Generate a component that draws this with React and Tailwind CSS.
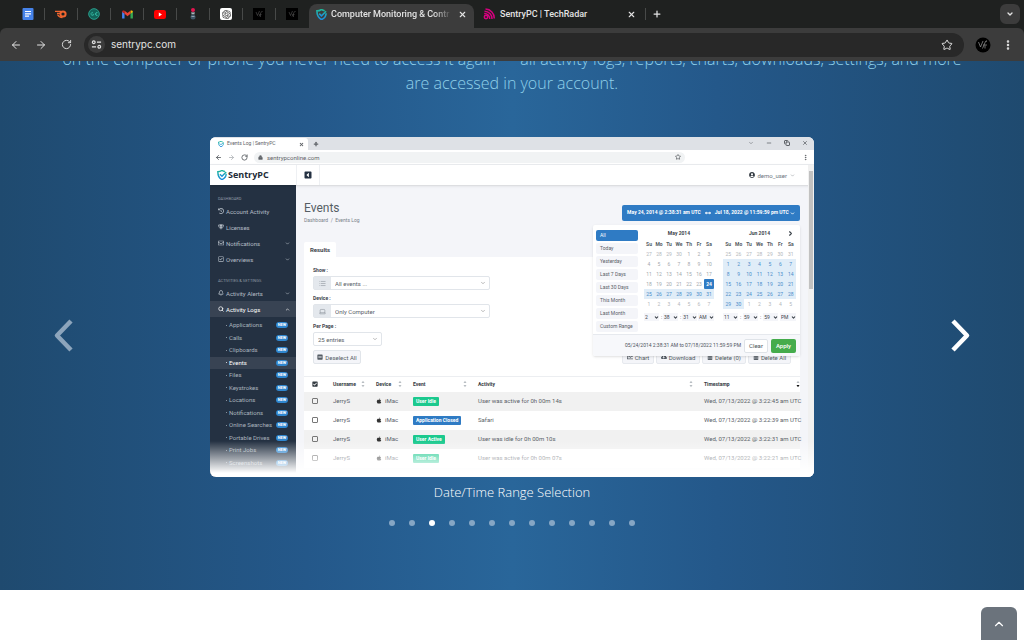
import {
  ArrowLeft, ArrowRight, RotateCw, Star, ChevronDown, ChevronUp, ChevronRight,
  X, Plus, Minus, Copy, MoreVertical, Lock, Bell, Search, List, Laptop,
} from 'lucide-react'
import {
  FaHistory, FaGem, FaRegEnvelope, FaRegCheckSquare, FaCheckSquare, FaMinusSquare, FaApple,
  FaTrashAlt, FaChartLine, FaCloudDownloadAlt, FaUserCircle, FaCaretSquareLeft, FaArrowsAltH,
} from 'react-icons/fa'
import { SiOpenai } from 'react-icons/si'

const ShieldLogo = ({ className }) => (
  <svg viewBox="0 0 24 24" className={className} fill="none" aria-hidden="true">
    <defs>
      <linearGradient id="shield" x1="0" y1="0" x2="0" y2="1">
        <stop offset="0" stopColor="#1fb89a" />
        <stop offset="1" stopColor="#1d8ee0" />
      </linearGradient>
    </defs>
    <path d="M22 9c0 7-3 11-10 14C5 20 2 15 2 4c4 0 7-1 10-3 2 1.500 4 2.400 7 2.800" stroke="url(#shield)" strokeWidth="3.500" />
    <path d="M7 10l5 5L22 5" stroke="url(#shield)" strokeWidth="3.500" />
  </svg>
)

const DocsIcon = () => (
  <svg viewBox="0 0 12 12" className="size-3">
    <rect x="0.500" y="0" width="11" height="12" rx="1" fill="#4683ea" />
    <path d="M3 3.500h6M3 5.800h6M3 8.100h4" stroke="#fff" strokeWidth="1.200" />
  </svg>
)

const SemrushIcon = () => (
  <svg viewBox="0 0 12 12" className="size-3" fill="none">
    <path d="M0 3.300h6M2 5.300h3" stroke="#f0652f" strokeWidth="1.200" />
    <circle cx="8" cy="6" r="2.600" stroke="#f0652f" strokeWidth="2" />
    <path d="M2.500 6.500c1 2 2.500 3 5 3" stroke="#f0652f" strokeWidth="1.300" />
  </svg>
)

const GreenIcon = () => (
  <svg viewBox="0 0 12 12" className="size-3" fill="none">
    <circle cx="6" cy="6" r="5.300" fill="#12645a" stroke="#2aa08d" />
    <path d="M5 4.500a1.500 1.500 0 1 0 .3 2.700V6H4.500M9.500 4.500a1.600 1.600 0 1 0 0 3M7 6h2" stroke="#38c2aa" strokeWidth="0.800" />
  </svg>
)

const GmailIcon = () => (
  <svg viewBox="0 0 12 10" className="h-[9px] w-[11px]">
    <path d="M0 1.500V9.500h2.700V4z" fill="#4285f4" />
    <path d="M12 1.500V9.500H9.300V4z" fill="#34a853" />
    <path d="M9.300 4.200L12 2.200C12 .4 10.400 0 9.300.9z" fill="#fbbc04" />
    <path d="M2.700 4.200L0 2.200C0 .4 1.600 0 2.700.9z" fill="#c5221f" />
    <path d="M2.700.9L6 3.400 9.300.9v3.400L6 6.900 2.700 4.300z" fill="#ea4335" />
  </svg>
)

const YoutubeIcon = () => (
  <svg viewBox="0 0 12 9" className="h-[9px] w-3">
    <rect width="12" height="9" rx="2.200" fill="#f00" />
    <path d="M4.800 2.500v4L8 4.500z" fill="#fff" />
  </svg>
)

const FigureIcon = () => (
  <svg viewBox="0 0 12 12" className="size-3">
    <circle cx="6" cy="2" r="2" fill="#e5144f" />
    <path d="M4 4.200h4l-.5 2.300h-3z" fill="#8b9297" />
    <circle cx="6" cy="9" r="2.500" fill="#3f5566" />
    <path d="M5 5.500h2M4.500 8.500h3" stroke="#b9c4cc" strokeWidth="0.700" />
  </svg>
)

const OpenAiIcon = () => (
  <span className="flex size-3 items-center justify-center rounded-[2px] bg-white">
    <SiOpenai className="size-[9px] text-[#333]" />
  </span>
)

const ScriptIcon = () => (
  <svg viewBox="0 0 12 12" className="size-3" fill="none">
    <rect width="12" height="12" fill="#000" />
    <path d="M3 4l1.500 3.500L6.500 3M6 8.500L8.300 4c.6-1 1.200-.6.800 0M6.500 6.500h2M7.500 7v2" stroke="#666" strokeWidth="0.500" />
  </svg>
)

const RadarIcon = () => (
  <svg viewBox="0 0 12 12" className="size-3" fill="none" stroke="#d6007f" strokeWidth="1.500">
    <circle cx="3" cy="9" r="1.700" />
    <path d="M1.200 5.500a5.300 5.300 0 0 1 5.500 5.500M1.500 3.200A7.500 7.500 0 0 1 9 11M2.500 1A9 9 0 0 1 11.200 10.500" />
  </svg>
)

const pinnedTabs = [DocsIcon, SemrushIcon, GreenIcon, GmailIcon, YoutubeIcon, FigureIcon, OpenAiIcon, ScriptIcon, ScriptIcon]

const mainNav = [
  { label: 'Account Activity', icon: FaHistory },
  { label: 'Licenses', icon: FaGem },
  { label: 'Notifications', icon: FaRegEnvelope, arrow: ChevronDown },
  { label: 'Overviews', icon: FaRegCheckSquare, arrow: ChevronDown },
]

const activityNav = [
  { label: 'Activity Alerts', icon: Bell, arrow: ChevronDown },
  { label: 'Activity Logs', icon: Search, arrow: ChevronUp, active: true },
]

const logTypes = ['Applications', 'Calls', 'Clipboards', 'Events', 'Files', 'Keystrokes', 'Locations', 'Notifications', 'Online Searches', 'Portable Drives', 'Print Jobs', 'Screenshots']

const events = [
  { event: 'User Idle', color: 'bg-[#1bc98e]', activity: 'User was active for 0h 00m 14s', time: 'Wed, 07/13/2022 @ 3:22:45 am UTC' },
  { event: 'Application Closed', color: 'bg-[#2f7bc4]', activity: 'Safari', time: 'Wed, 07/13/2022 @ 3:22:39 am UTC' },
  { event: 'User Active', color: 'bg-[#1bc98e]', activity: 'User was idle for 0h 00m 10s', time: 'Wed, 07/13/2022 @ 3:22:31 am UTC' },
  { event: 'User Idle', color: 'bg-[#1bc98e]', activity: 'User was active for 0h 00m 07s', time: 'Wed, 07/13/2022 @ 3:22:21 am UTC' },
]

const ranges = ['All', 'Today', 'Yesterday', 'Last 7 Days', 'Last 30 Days', 'This Month', 'Last Month', 'Custom Range']
const weekdays = ['Su', 'Mo', 'Tu', 'We', 'Th', 'Fr', 'Sa']

// 42 cells, starting from the last days of the previous month
const buildMonth = (prevStart, prevEnd, days) => {
  const cells = []
  for (let d = prevStart; d <= prevEnd; d++) cells.push({ day: d, out: true })
  for (let d = 1; d <= days; d++) cells.push({ day: d })
  for (let d = 1; cells.length < 42; d++) cells.push({ day: d, out: true })
  return [0, 1, 2, 3, 4, 5].map((w) => cells.slice(w * 7, w * 7 + 7))
}

const may = buildMonth(27, 30, 31)
const june = buildMonth(25, 31, 30)

const dayClass = (cell, from) => {
  if (cell.out) return 'text-[#b3b7bb]'
  if (cell.day === from && from > 1) return 'rounded-[1px] bg-[#2f7bc4] font-bold text-white'
  if (cell.day >= from) return 'bg-[#e0edf8] text-[#4a8cc9]'
  return 'text-[#a3a8ad]'
}

const Calendar = ({ title, weeks, from, next, times, className }) => (
  <div className={className}>
    <div className="relative flex h-[11px] items-center justify-center font-bold text-[#3d444b]">
      {title}
      {next && (
        <button aria-label="Next month" className="absolute right-[2px]">
          <ChevronRight className="size-[7px]" strokeWidth={4} />
        </button>
      )}
    </div>
    <table className="w-full table-fixed text-center">
      <thead>
        <tr className="h-[10px]">
          {weekdays.map((d) => <th key={d} className="p-0 font-bold text-[#555c63]">{d}</th>)}
        </tr>
      </thead>
      <tbody>
        {weeks.map((week, i) => (
          <tr key={i} className="h-[10px]">
            {week.map((cell, j) => <td key={j} className={`p-0 ${dayClass(cell, from)}`}>{cell.day}</td>)}
          </tr>
        ))}
      </tbody>
    </table>
    <div className="mt-1 flex items-center justify-between text-[#3d444b]">
      {times.map((t, i) => (
        <div key={i} className="flex items-center gap-[2px]">
          <div className="relative flex items-center bg-[#f4f5f9]">
            <select aria-label={`${title} time part ${i + 1}`} className={`h-[8px] appearance-none pl-px ${i === 3 ? 'w-4' : 'w-[15px]'}`}>
              <option>{t}</option>
            </select>
            <ChevronDown className="pointer-events-none absolute right-0 size-[5px]" strokeWidth={5} />
          </div>
          {i < 2 && <span>:</span>}
        </div>
      ))}
    </div>
  </div>
)

const DatePicker = () => (
  <div className="absolute top-5 right-0 z-20 w-[207px] overflow-hidden rounded-[2px] bg-white text-[5px] leading-[7px] shadow-sm shadow-black/10">
    <div className="flex h-[109px] pt-[3px] pr-[3px] pl-[3px]">
      <ul className="mt-[2px] flex w-[42px] flex-col gap-[2px]">
        {ranges.map((r, i) => (
          <li key={r}>
            <button className={`flex h-[11px] w-full items-center rounded-[2px] pl-1 ${i === 0 ? 'bg-[#2f7bc4] text-white' : 'bg-[#f4f5f9] text-[#5a6168]'}`}>
              {r}
            </button>
          </li>
        ))}
      </ul>
      <Calendar className="ml-[6px] w-[70px]" title="May 2014" weeks={may} from={24} times={['2', '38', '31', 'AM']} />
      <Calendar className="ml-[9px] w-[73px]" title="Jun 2014" weeks={june} from={1} next times={['11', '59', '59', 'PM']} />
    </div>
    <div className="flex h-[22px] items-center justify-end gap-[3px] border-t border-[#e6e9ee] bg-[#f7f8fb] pr-1 text-[#4d545b]">
      <span>05/24/2014 2:38:31 AM to 07/18/2022 11:59:59 PM</span>
      <button className="h-[14px] w-6 rounded-[2px] border border-[#dfe3e8] bg-white text-[6px]">Clear</button>
      <button className="h-[14px] w-[25px] rounded-[2px] bg-[#45ac4c] text-[6px] font-medium text-white">Apply</button>
    </div>
  </div>
)

const NavItem = ({ item }) => {
  const Icon = item.icon
  const Arrow = item.arrow
  return (
    <a href="#" className={`flex h-4 items-center gap-[2px] pr-[6px] pl-2 text-[6px] ${item.active ? 'bg-[#384353] text-white' : 'text-[#b4bcc5]'}`}>
      <Icon className="size-[6px]" strokeWidth={item.icon === Bell || item.icon === Search ? 3 : 0} />
      <span className="flex-1">{item.label}</span>
      {Arrow && <Arrow className="size-[5px]" strokeWidth={3} />}
    </a>
  )
}

const Sidebar = () => (
  <nav className="w-[86px] shrink-0 bg-[#243142] pt-[10px]">
    <p className="h-2 pl-2 text-[4px] leading-[8px] text-[#8d97a3]">DASHBOARD</p>
    {mainNav.map((item) => <NavItem key={item.label} item={item} />)}
    <p className="mt-[10px] h-2 pl-2 text-[4px] leading-[8px] text-[#8d97a3]">ACTIVITIES &amp; SETTINGS</p>
    {activityNav.map((item) => <NavItem key={item.label} item={item} />)}
    <div className="mt-[2px] grid h-[150px] grid-rows-12">
      {logTypes.map((name) => (
        <a
          key={name}
          href="#"
          className={`flex items-center gap-[2px] pr-2 pl-4 text-[6px] leading-[8px] ${name === 'Events' ? 'bg-[#384353] text-white' : 'text-[#aab3bd]'}`}
        >
          <span className="size-px rounded-full bg-current" />
          <span className="flex-1 whitespace-nowrap">{name}</span>
          <span className="flex h-[6px] w-3 items-center justify-center rounded-full bg-[#2f86cf] text-[4px] font-bold text-white">NEW</span>
        </a>
      ))}
    </div>
  </nav>
)

const Field = ({ id, label, icon: Icon, value, className }) => (
  <div className="h-7">
    <label htmlFor={id} className="block h-[10px] text-[5px] leading-[9px] font-bold text-[#3d444b]">{label}</label>
    <div className={`relative flex h-[14px] items-center rounded-[2px] border border-[#e1e5ea] bg-white ${className}`}>
      {Icon && (
        <span className="flex h-full w-[17px] items-center justify-center bg-[#e4e8ed] text-[#8b939b]">
          <Icon className="size-[7px]" />
        </span>
      )}
      <select id={id} className="h-full flex-1 appearance-none pl-1 text-[6px] text-[#5a6168]">
        <option>{value}</option>
      </select>
      <ChevronDown className="pointer-events-none absolute right-[3px] size-[6px] text-[#777]" />
    </div>
  </div>
)

const SortIcon = ({ active }) => (
  <svg viewBox="0 0 4 8" className="h-2 w-1">
    <path d="M0.500 3L2 .8 3.500 3z" fill="#b8bdc2" />
    <path d="M0.500 5L2 7.200 3.500 5z" fill={active ? '#111' : '#b8bdc2'} />
  </svg>
)

const actions = [
  { label: 'Chart', icon: FaChartLine, width: 'w-8' },
  { label: 'Download', icon: FaCloudDownloadAlt, width: 'w-11' },
  { label: 'Delete (0)', icon: FaTrashAlt, width: 'w-11' },
  { label: 'Delete All', icon: FaTrashAlt, width: 'w-[43px]' },
]

const columns = [
  { label: 'Username', width: 'w-[43px]' },
  { label: 'Device', width: 'w-[37px]' },
  { label: 'Event', width: 'w-[65px]' },
  { label: 'Activity', width: '' },
  { label: 'Timestamp', width: 'w-24', active: true },
]

const EventsPage = () => (
  <div className="min-w-0 flex-1 bg-[#f4f5f9] pt-[17px] pr-2 pl-2">
    <div className="flex h-10 justify-between">
      <div>
        <h2 className="text-[12px] leading-[13px] text-[#555d65]">Events</h2>
        <p className="mt-[2px] text-[5px] leading-[7px] text-[#7a828a]">Dashboard &nbsp;/&nbsp; Events Log</p>
      </div>
      <div className="relative mt-[3px]">
        <button className="flex h-4 w-[178px] items-center justify-center gap-1 rounded-[2px] bg-[#2f7bc4] text-[5px] font-bold whitespace-nowrap text-white">
          May 24, 2014 @ 2:38:31 am UTC
          <FaArrowsAltH className="size-[6px]" />
          <span className="flex items-center gap-px">Jul 18, 2022 @ 11:59:59 pm UTC <ChevronDown className="size-[5px]" strokeWidth={4} /></span>
        </button>
        <DatePicker />
      </div>
    </div>
    <button className="block h-[15px] w-8 rounded-t-[2px] bg-white text-[6px] font-bold text-[#3d444b]">Results</button>
    <div className="bg-white pt-[9px]">
      <div className="px-[9px]">
        <Field id="show" label="Show :" icon={List} value="All events ..." className="w-[177px]" />
        <Field id="device" label="Device :" icon={Laptop} value="Only Computer" className="w-[177px]" />
        <Field id="per-page" label="Per Page :" value="25 entries" className="w-[69px]" />
        <div className="flex justify-between">
          <button className="flex h-[14px] w-12 items-center justify-center gap-[2px] rounded-[2px] border border-[#e1e5ea] bg-[#f4f5f9] text-[6px] whitespace-nowrap text-[#555d65]">
            <FaMinusSquare className="size-[6px]" />Deselect All
          </button>
          <div className="flex gap-[2px]">
            {actions.map(({ label, icon: Icon, width }) => (
              <button key={label} className={`flex h-[14px] items-center justify-center gap-[2px] rounded-[2px] border border-[#e6e9ee] bg-[#f4f5f9] text-[6px] whitespace-nowrap text-[#555d65] ${width}`}>
                <Icon className="size-[6px]" />{label}
              </button>
            ))}
          </div>
        </div>
      </div>
      <table className="mt-3 w-full table-fixed text-left text-[6px] leading-[8px] text-[#5a6168]">
        <thead>
          <tr className="h-[15px] border-t border-[#eceef1] text-[5px] text-[#333a41]">
            <th className="w-[29px] p-0 pl-2"><FaCheckSquare className="size-[6px]" /></th>
            {columns.map((c) => (
              <th key={c.label} className={`p-0 font-bold ${c.width}`}>
                <span className={`flex items-center justify-between ${c.active ? '' : 'pr-[11px]'}`}>{c.label}<SortIcon active={c.active} /></span>
              </th>
            ))}
          </tr>
        </thead>
        <tbody>
          {events.map((e, i) => (
            <tr key={i} className="h-[19px] odd:bg-[#f1f1f1]">
              <td className="p-0 pl-2">
                <input type="checkbox" aria-label={`Select row ${i + 1}`} className="block size-[6px] appearance-none rounded-[1px] border border-[#777]" />
              </td>
              <td className="p-0">JerryS</td>
              <td className="p-0"><span className="flex items-center gap-[3px]"><FaApple className="size-[6px] text-[#333]" />iMac</span></td>
              <td className="p-0">
                <span className={`block w-fit rounded-[1px] px-[3px] text-[5px] leading-[9px] font-bold text-white ${e.color}`}>{e.event}</span>
              </td>
              <td className="p-0">{e.activity}</td>
              <td className="p-0 whitespace-nowrap">{e.time}</td>
            </tr>
          ))}
        </tbody>
      </table>
    </div>
  </div>
)

const Slide = () => (
  <div className="relative h-[340px] w-full max-w-[604px] overflow-hidden rounded-md bg-white font-['Roboto',sans-serif]">
    <div className="flex h-[13px] items-end bg-[#dee1e6] text-[#5f6368]">
      <div className="flex h-3 w-[98px] items-center gap-[3px] rounded-t-[3px] bg-white pr-1 pl-2 text-[5px]">
        <ShieldLogo className="size-[6px]" />
        <span className="flex-1">Events Log | SentryPC</span>
        <X className="size-[5px]" strokeWidth={5} />
      </div>
      <Plus className="mb-[3px] ml-[5px] size-[6px]" strokeWidth={5} />
      <div className="mb-[4px] ml-auto flex gap-3 pr-[6px]">
        <ChevronDown className="size-[6px]" />
        <Minus className="size-[6px]" strokeWidth={3} />
        <Copy className="size-[6px]" strokeWidth={4} />
        <X className="size-[6px]" strokeWidth={3} />
      </div>
    </div>
    <div className="flex h-[15px] items-center gap-[6px] border-b border-[#eceef1] pr-[5px] pl-[5px] text-[#5f6368]">
      <ArrowLeft className="size-[7px]" strokeWidth={3} />
      <ArrowRight className="size-[7px] text-[#b5b8bc]" strokeWidth={3} />
      <RotateCw className="size-[7px]" strokeWidth={3} />
      <div className="flex h-[11px] w-[431px] items-center gap-1 rounded-full bg-[#f1f3f4] px-1 text-[6px]">
        <Lock className="size-[5px]" fill="currentColor" />
        <span className="flex-1">sentrypconline.com</span>
        <Star className="size-[6px]" strokeWidth={3} />
      </div>
      <MoreVertical className="ml-auto size-[7px]" strokeWidth={3} />
    </div>
    <div className="relative">
      <header className="relative z-10 flex h-5 items-center bg-white pr-[19px] shadow-sm shadow-black/10">
        <div className="flex h-full w-[86px] items-center gap-px pl-[7px] font-['Open_Sans',sans-serif] text-[9px] font-bold text-[#222b36]">
          <ShieldLogo className="size-[10px]" />SentryPC
        </div>
        <button aria-label="Toggle sidebar" className="flex h-full w-6 items-center justify-center border-x border-[#eef0f3]">
          <FaCaretSquareLeft className="size-2 text-[#243142]" />
        </button>
        <span className="ml-auto flex items-center gap-[2px] text-[6px] text-[#6d757d]">
          <FaUserCircle className="size-[6px] text-[#333a41]" />demo_user<ChevronDown className="ml-px size-[5px]" />
        </span>
      </header>
      <div className="flex h-[292px] pr-[6px]">
        <Sidebar />
        <EventsPage />
      </div>
      <div className="absolute inset-y-0 right-0 z-10 w-[6px] bg-[#f1f1f1] pt-[6px]">
        <div className="mx-px h-[118px] bg-[#c1c1c1]" />
      </div>
    </div>
    <div className="absolute inset-x-0 bottom-0 z-30 h-10 bg-gradient-to-b from-white/0 from-10% to-white to-90%" />
  </div>
)

const BrowserChrome = () => (
  <header className="relative z-10 bg-[#1f2120] font-['Inter',sans-serif] text-[#e3e3e3]">
    <div className="flex h-7 items-end pr-1 pl-3 font-['Roboto',sans-serif]">
      {pinnedTabs.map((Icon, i) => (
        <div key={i} className="flex h-7 w-[33px] items-center">
          <span className="flex flex-1 justify-center"><Icon /></span>
          <span className={`h-3 w-px ${i < pinnedTabs.length - 1 ? 'bg-[#484a49]' : ''}`} />
        </div>
      ))}
      <div className="flex h-6 w-[165px] items-center rounded-t-lg bg-[#3c3c3c] px-[7px] pb-[4px]">
        <ShieldLogo className="size-[11px] shrink-0" />
        <span className="ml-1 w-[121px] overflow-hidden text-[9px] leading-3 font-medium whitespace-nowrap [mask-image:linear-gradient(to_right,#000_85%,transparent)]">Computer Monitoring &amp; Contr</span>
        <button aria-label="Close tab" className="ml-auto"><X className="size-[9px]" strokeWidth={3} /></button>
      </div>
      <div className="flex h-6 w-[171px] items-center pr-[9px] pb-[4px] pl-[9px]">
        <RadarIcon />
        <span className="ml-[5px] text-[9px] leading-3 font-medium">SentryPC | TechRadar</span>
        <button aria-label="Close tab" className="ml-auto"><X className="size-[9px]" strokeWidth={3} /></button>
      </div>
      <span className="mb-2 h-3 w-px bg-[#484a49]" />
      <button aria-label="New tab" className="mb-[9px] ml-[6px]"><Plus className="size-[10px]" strokeWidth={3} /></button>
      <button aria-label="Search tabs" className="mb-1 ml-auto flex size-5 items-center justify-center rounded-md bg-[#3c3c3c]">
        <ChevronDown className="size-2" strokeWidth={4} />
      </button>
    </div>
    <div className="flex h-[33px] items-center rounded-t-md bg-[#3c3c3c] pr-[10px] pl-[10px]">
      <button aria-label="Back"><ArrowLeft className="size-3" /></button>
      <button aria-label="Forward" className="ml-[13px]"><ArrowRight className="size-3" /></button>
      <button aria-label="Reload" className="ml-[14px]"><RotateCw className="size-[11px]" /></button>
      <div className="ml-3 flex h-6 flex-1 items-center rounded-full bg-[#282828] pr-[11px] pl-1">
        <span className="flex size-[17px] items-center justify-center rounded-full bg-[#3c3c3c]">
          <svg viewBox="0 0 12 12" className="size-[11px]" fill="none" stroke="#e3e3e3" strokeWidth="1.300">
            <circle cx="3" cy="3.500" r="1.500" /><path d="M6.500 3.500H11M1 8.500h4.500" /><circle cx="9" cy="8.500" r="1.500" />
          </svg>
        </span>
        <input aria-label="Address" defaultValue="sentrypc.com" className="ml-[6px] flex-1 bg-transparent text-[10px] outline-none" />
        <button aria-label="Bookmark"><Star className="size-3" /></button>
      </div>
      <svg viewBox="0 0 16 16" className="ml-[11px] size-4" fill="none">
        <circle cx="8" cy="8" r="7.500" fill="#000" />
        <path d="M3.500 5l2 5 2.500-6M7.500 11.500l3-7c1-1.500 1.500-.5.500.500M8 8h4M10 8.500v3" stroke="#999" strokeWidth="0.700" />
      </svg>
      <button aria-label="Menu" className="ml-[11px]"><MoreVertical className="size-3" strokeWidth={3} /></button>
    </div>
  </header>
)

const App = () => (
  <div className="min-h-screen bg-white">
    <BrowserChrome />
    <main className="flex h-[529px] flex-col overflow-hidden bg-[linear-gradient(to_right,#1f4a6f,#24588a_30%,#29669a_50%,#24588a_70%,#1f4a6f)] font-['Open_Sans',sans-serif]">
      <p className="-mt-[14px] text-center text-[16px] leading-6 font-light text-[#8fd0ea]">
        on the computer or phone you never need to access it again — all activity logs, reports, charts, downloads, settings, and more
        <br />
        are accessed in your account.
      </p>
      <div className="mt-[42px] flex items-center justify-between px-[46px]">
        <button aria-label="Previous slide" className="mt-14 text-[#8da5bc]">
          <svg viewBox="0 0 34 34" className="size-[34px]" fill="none" stroke="currentColor" strokeWidth="4.500" strokeLinejoin="round">
            <path d="M25 3L11 17.500 25 32" />
          </svg>
        </button>
        <Slide />
        <button aria-label="Next slide" className="mt-14 text-white">
          <svg viewBox="0 0 34 34" className="size-[34px]" fill="none" stroke="currentColor" strokeWidth="4.500" strokeLinejoin="round">
            <path d="M9 3l14 14.500L9 32" />
          </svg>
        </button>
      </div>
      <p className="mt-[5px] text-center text-[13px] leading-5 font-light text-white">Date/Time Range Selection</p>
      <div className="mt-[18px] flex justify-center gap-[14px]">
        {Array.from({ length: 13 }, (_, i) => (
          <button key={i} aria-label={`Slide ${i + 1}`} className={`size-[6px] rounded-full ${i === 2 ? 'bg-white' : 'bg-[#86a6c4]'}`} />
        ))}
      </div>
    </main>
    <button aria-label="Back to top" className="fixed right-[7px] bottom-0 flex h-[33px] w-9 items-center justify-center rounded-t-md bg-[#6b737c] text-white">
      <ChevronUp className="size-[14px]" />
    </button>
  </div>
)

export default App
